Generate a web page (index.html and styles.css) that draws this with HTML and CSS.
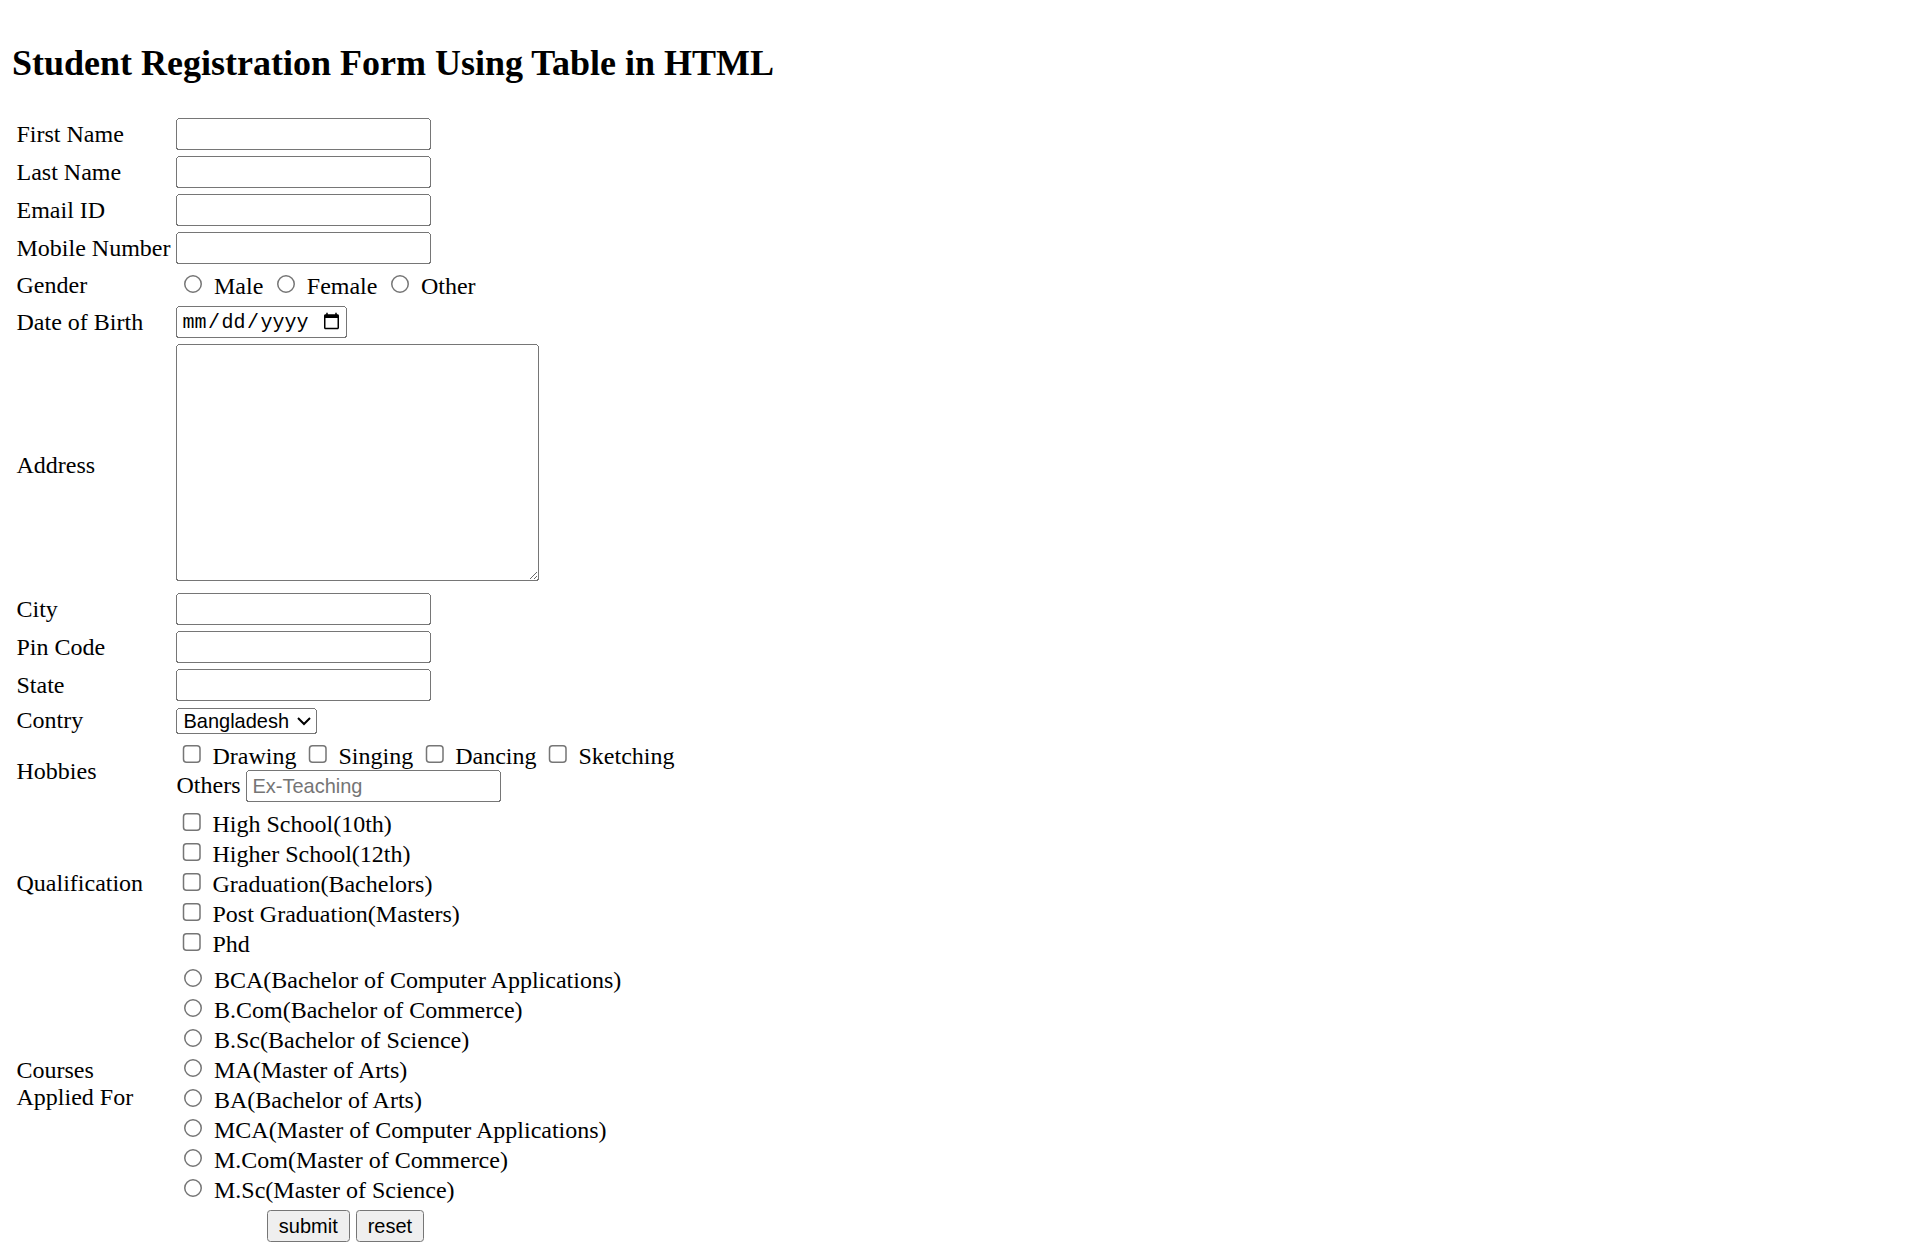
FILE: index.html
```html
<!DOCTYPE html>
<html lang="en">
<head>
<meta charset="utf-8">
<title>Student Registration Form Using Table in HTML</title>
<link rel="stylesheet" href="styles.css">
</head>
<body class="doc">
<div class="page">
<h2 class="title">Student Registration Form Using Table in HTML</h2>
<form class="reg-form">
<table class="form-table">
<tr><td class="lbl">First Name</td><td><input type="text" class="field"></td></tr>
<tr><td class="lbl">Last Name</td><td><input type="text" class="field"></td></tr>
<tr><td class="lbl">Email ID</td><td><input type="text" class="field"></td></tr>
<tr><td class="lbl">Mobile Number</td><td><input type="text" class="field"></td></tr>
<tr><td class="lbl">Gender</td><td><input type="radio" name="gender" class="radio"> Male <input type="radio" name="gender" class="radio"> Female <input type="radio" name="gender" class="radio"> Other</td></tr>
<tr><td class="lbl">Date of Birth</td><td><input type="date" class="date"></td></tr>
<tr><td class="lbl">Address</td><td><textarea class="address" rows="10" cols="30"></textarea></td></tr>
<tr><td class="lbl">City</td><td><input type="text" class="field"></td></tr>
<tr><td class="lbl">Pin Code</td><td><input type="text" class="field"></td></tr>
<tr><td class="lbl">State</td><td><input type="text" class="field"></td></tr>
<tr><td class="lbl">Contry</td><td><select class="country"><option>Bangladesh</option><option>India</option><option>Nepal</option></select></td></tr>
<tr><td class="lbl">Hobbies</td><td><input type="checkbox" class="check"> Drawing <input type="checkbox" class="check"> Singing <input type="checkbox" class="check"> Dancing <input type="checkbox" class="check"> Sketching<br>Others <input type="text" class="field" placeholder="Ex-Teaching"></td></tr>
<tr><td class="lbl">Qualification</td><td><input type="checkbox" class="check"> High School(10th)<br><input type="checkbox" class="check"> Higher School(12th)<br><input type="checkbox" class="check"> Graduation(Bachelors)<br><input type="checkbox" class="check"> Post Graduation(Masters)<br><input type="checkbox" class="check"> Phd</td></tr>
<tr><td class="lbl">Courses<br>Applied For</td><td><input type="radio" name="course" class="radio"> BCA(Bachelor of Computer Applications)<br><input type="radio" name="course" class="radio"> B.Com(Bachelor of Commerce)<br><input type="radio" name="course" class="radio"> B.Sc(Bachelor of Science)<br><input type="radio" name="course" class="radio"> MA(Master of Arts)<br><input type="radio" name="course" class="radio"> BA(Bachelor of Arts)<br><input type="radio" name="course" class="radio"> MCA(Master of Computer Applications)<br><input type="radio" name="course" class="radio"> M.Com(Master of Commerce)<br><input type="radio" name="course" class="radio"> M.Sc(Master of Science)</td></tr>
<tr><td colspan="2" class="actions"><input type="submit" value="submit" class="btn"> <input type="reset" value="reset" class="btn"></td></tr>
</table>
</form>
</div>
</body>
</html>
```
FILE: styles.css
```css
.doc {
  margin: 0;
  background: #ffffff;
  color: #000000;
  font-family: "Liberation Serif", "Times New Roman", serif;
  font-size: 16px;
}
.page {
  zoom: 1.5;
  padding: 8px;
}
.title {
  font-size: 24px;
  font-weight: bold;
  margin: 0.83em 0;
}
.reg-form {
  margin: 0;
}
.form-table {
  border-spacing: 2px;
}
.form-table td {
  padding: 1px;
  vertical-align: middle;
}
.field,
.date,
.country,
.btn {
  font-family: "Liberation Sans", Arial, sans-serif;
  font-size: 13.3333px;
}
.field {
  width: 170px;
  height: 21.3333px;
  box-sizing: border-box;
}
.date {
  font-family: "Liberation Mono", "Courier New", monospace;
  width: 114px;
  height: 21.3333px;
  box-sizing: border-box;
}
.address {
  font-family: "Liberation Mono", "Courier New", monospace;
  font-size: 13.3333px;
  width: 242px;
  height: 158px;
  box-sizing: border-box;
}
.country {
  width: 94px;
  height: 17.3333px;
  box-sizing: border-box;
}
.actions {
  text-align: center;
}
.btn {
  height: 21.3333px;
  box-sizing: border-box;
}
```
